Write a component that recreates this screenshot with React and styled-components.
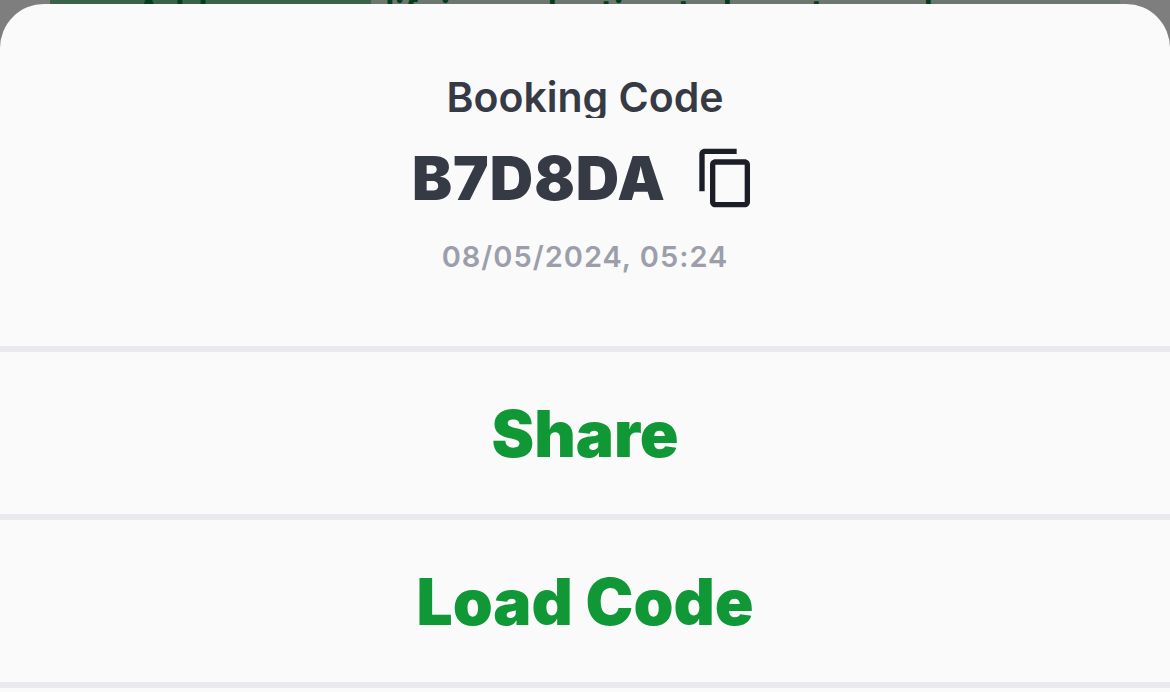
import styled, { createGlobalStyle } from 'styled-components';
import { MdContentCopy } from 'react-icons/md';

const GlobalStyle = createGlobalStyle`
  * {
    box-sizing: border-box;
  }

  body {
    margin: 0;
    background: #7e7e7e;
    font-family: Inter, "Liberation Sans", sans-serif;
  }
`;

const Page = styled.div`
  min-height: 100vh;
  display: flex;
  flex-direction: column;
`;

// edge of the dimmed bonus progress bar that stays visible above the sheet
const BonusBar = styled.div`
  height: 4px;
  margin: 0 50px;
  overflow: hidden;
  background: linear-gradient(90deg, #3b6147 ${({ $progress }) => $progress}%, #6c776f 0);
  color: #063d1a;
  font-size: 37px;
  font-weight: 600;
  line-height: 26px;
  text-align: center;
  white-space: nowrap;
`;

const Sheet = styled.main`
  flex: 1;
  background: #fafafb;
  border-radius: 44px 44px 0 0;
`;

const Header = styled.header`
  display: flex;
  flex-direction: column;
  align-items: center;
  padding: 72px 24px 74px;
  color: #353a45;
`;

const Title = styled.h1`
  margin: 0;
  overflow: hidden;
  font-size: 41px;
  font-weight: 600;
  line-height: 42px;
`;

const CodeRow = styled.div`
  display: flex;
  align-items: center;
  gap: 28px;
  margin: 28px 0 32px;
`;

const Code = styled.strong`
  font-size: 60px;
  font-weight: 900;
  line-height: 64px;
  letter-spacing: 1px;
`;

const CopyButton = styled.button`
  display: flex;
  padding: 0;
  border: 0;
  background: none;
  color: #1b1e27;
  cursor: pointer;
`;

const Timestamp = styled.time`
  color: #9c9faa;
  font-size: 29px;
  font-weight: 600;
  line-height: 30px;
  letter-spacing: 1px;
`;

const Actions = styled.div`
  border-bottom: 6px solid #e9eaed;
`;

const Action = styled.button`
  display: block;
  width: 100%;
  padding: 50px 24px 48px;
  border: 0;
  border-top: 6px solid #e9eaed;
  background: none;
  color: #109836;
  font-family: inherit;
  font-size: 64px;
  font-weight: 900;
  line-height: 64px;
  cursor: pointer;
`;

const actions = ['Share', 'Load Code'];

const App = () => {
  return (
    <>
      <GlobalStyle />
      <Page>
        <BonusBar $progress={30}>Add more qualifying selection to boost your bonus</BonusBar>
        <Sheet>
          <Header>
            <Title>Booking Code</Title>
            <CodeRow>
              <Code>B7D8DA</Code>
              <CopyButton type="button" aria-label="Copy booking code">
                <MdContentCopy size={64} />
              </CopyButton>
            </CodeRow>
            <Timestamp dateTime="2024-05-08T05:24">08/05/2024, 05:24</Timestamp>
          </Header>
          <Actions>
            {actions.map((label) => (
              <Action key={label} type="button">{label}</Action>
            ))}
          </Actions>
        </Sheet>
      </Page>
    </>
  );
};

export default App;
